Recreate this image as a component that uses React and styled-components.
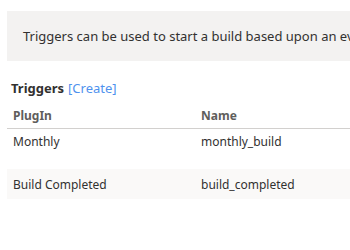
import React from "react";
import styled, { createGlobalStyle } from "styled-components";

const Global = createGlobalStyle`
  html, body { margin: 0; padding: 0; background: #ffffff; overflow: hidden; }
  body { font-family: "Noto Sans", "Open Sans", sans-serif; color: #323130; }
`;

const Page = styled.div`
  width: 640px;
  padding: 11px 0 0 7px;
  display: flex;
  flex-direction: column;
`;

const Notice = styled.div`
  background: #f3f2f1;
  height: 50px;
  display: flex;
  align-items: center;
  padding-left: 16px;
  font-size: 13px;
  white-space: nowrap;
  color: #323130;
`;

const Heading = styled.h2`
  margin: 18px 0 0 4px;
  font-size: 13px;
  font-weight: 700;
  color: #323130;
  line-height: 18px;
  display: flex;
  gap: 4px;
`;

const Link = styled.a`
  color: #4f92ee;
  font-weight: 400;
  text-decoration: none;
  cursor: pointer;
`;

const Table = styled.table`
  margin-top: 5px;
  width: 100%;
  border-collapse: collapse;
  font-size: 12px;
`;

const Th = styled.th`
  text-align: left;
  font-weight: 700;
  color: #605e5c;
  padding: 0 6px;
  height: 26px;
  border-bottom: 1px solid #d2d0ce;
  width: ${(p) => p.$w || "auto"};
`;

const Row = styled.tr`
  background: ${(p) => (p.$alt ? "#faf9f8" : "#ffffff")};
  height: ${(p) => p.$h}px;
`;

const Td = styled.td`
  padding: ${(p) => p.$pad}px 6px 0;
  vertical-align: top;
  color: #323130;
  line-height: 16px;
`;

const rows = [
  { plugin: "Monthly", name: "monthly_build", h: 40, pad: 5 },
  { plugin: "Build Completed", name: "build_completed", h: 30, pad: 8 },
];

export default function App() {
  return (
    <>
      <Global />
      <Page>
        <Notice>
          Triggers can be used to start a build based upon an event, such as a schedule or the completion of another build.
        </Notice>
        <Heading>
          <span>Triggers</span>
          <Link>[Create]</Link>
        </Heading>
        <Table>
          <thead>
            <tr>
              <Th $w="176px">PlugIn</Th>
              <Th>Name</Th>
            </tr>
          </thead>
          <tbody>
            {rows.map((r, i) => (
              <Row key={r.name} $alt={i % 2 === 1} $h={r.h}>
                <Td $pad={r.pad}>{r.plugin}</Td>
                <Td $pad={r.pad}>{r.name}</Td>
              </Row>
            ))}
          </tbody>
        </Table>
      </Page>
    </>
  );
}
